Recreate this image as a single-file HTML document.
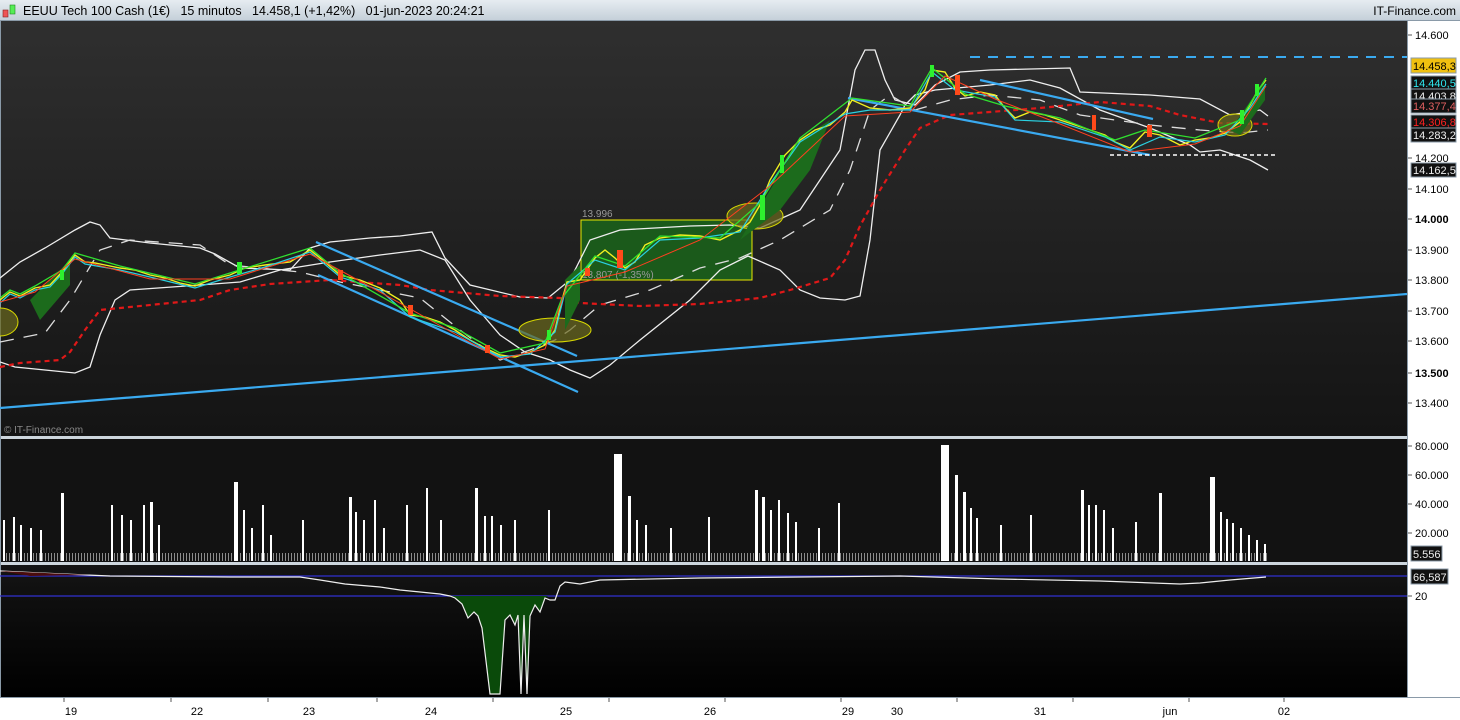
<!DOCTYPE html>
<html><head><meta charset="utf-8"><style>
html,body{margin:0;padding:0;width:1460px;height:720px;overflow:hidden;background:#fff;font-family:"Liberation Sans",Arial,sans-serif}
</style></head><body>
<svg width="1460" height="720" xmlns="http://www.w3.org/2000/svg" font-family="Liberation Sans, Arial, sans-serif">
<defs>
<linearGradient id="hd" x1="0" y1="0" x2="0" y2="1"><stop offset="0" stop-color="#e6ecf1"/><stop offset="1" stop-color="#c5d0d9"/></linearGradient>
<linearGradient id="mg" x1="0" y1="0" x2="0" y2="1"><stop offset="0" stop-color="#2f2f2f"/><stop offset="1" stop-color="#141414"/></linearGradient>
<linearGradient id="rg" x1="0" y1="0" x2="0" y2="1"><stop offset="0" stop-color="#141414"/><stop offset="1" stop-color="#000"/></linearGradient>
<pattern id="st" width="3" height="40" patternUnits="userSpaceOnUse"><rect x="0" y="0" width="1" height="40" fill="#ddd"/></pattern>
</defs>
<rect x="0" y="0" width="1460" height="20" fill="url(#hd)"/>
<rect x="0" y="20" width="1460" height="1" fill="#8a9aa8"/>
<rect x="3" y="10" width="5" height="7" fill="#e55" stroke="#822" stroke-width=".6"/>
<rect x="10" y="5" width="5" height="9" fill="#5e5" stroke="#282" stroke-width=".6"/>
<text x="23" y="15" font-size="12.5" fill="#000" xml:space="preserve">EEUU Tech 100 Cash (1€)   15 minutos   14.458,1 (+1,42%)   01-jun-2023 20:24:21</text>
<text x="1456" y="15" font-size="12" fill="#000" text-anchor="end">IT-Finance.com</text>
<rect x="1" y="21" width="1406" height="415" fill="url(#mg)"/>
<rect x="0" y="21" width="1" height="677" fill="#8a9aa8"/>
<rect x="1" y="436" width="1406" height="3" fill="#cdd6dd"/>
<rect x="1" y="439" width="1406" height="123" fill="#121212"/>
<rect x="1" y="562" width="1406" height="3" fill="#cdd6dd"/>
<rect x="1" y="565" width="1406" height="132" fill="url(#rg)"/>
<rect x="1407" y="21" width="1" height="677" fill="#8a9aa8"/>
<rect x="0" y="697" width="1460" height="1" fill="#8a9aa8"/>
<g fill="none">
<rect x="581" y="220" width="171" height="60" fill="#1b5a1b" stroke="#e8e800" stroke-width="1"/>
<text x="582" y="217" font-size="10" fill="#999">13.996</text>
<text x="582" y="278" font-size="10" fill="#999">13.807 (-1,35%)</text>
<path d="M0,362 L15,367 L75,373 L90,367 L100,335 L115,300 L130,290 L200,285 L240,282 L280,270 L330,262 L380,255 L420,250 L445,260 L470,300 L500,335 L525,352 L550,360 L570,370 L590,378 L610,365 L640,340 L690,300 L720,270 L748,256 L780,270 L800,290 L820,298 L845,300 L860,296 L870,240 L880,150 L900,115 L905,105 L915,95 L935,90 L990,85 L1030,80 L1060,88 L1100,110 L1150,128 L1190,145 L1200,152 L1220,150 L1250,160 L1268,170" stroke="#eee" stroke-width="1.3"/>
<path d="M0,278 L20,262 L45,248 L75,230 L90,222 L100,225 L110,238 L150,243 L200,248 L215,254 L240,268 L290,270 L310,248 L330,242 L370,238 L400,236 L432,232 L445,258 L470,285 L520,297 L548,298 L570,280 L590,240 L620,230 L690,226 L730,225 L760,228 L800,210 L840,150 L855,70 L865,50 L875,50 L885,80 L895,100 L915,105 L935,85 L960,72 L990,70 L1070,68 L1080,92 L1150,95 L1200,99 L1230,115 L1260,110 L1268,116" stroke="#eee" stroke-width="1.3"/>
<path d="M0,342 L45,333 L70,300 L100,250 L130,240 L200,245 L230,265 L300,272 L340,282 L380,290 L420,298 L460,330 L500,360 L530,350 L555,340 L570,330 L600,305 L650,290 L700,268 L740,258 L780,240 L830,210 L850,170 L870,110 L890,95 L915,110 L950,100 L990,95 L1040,100 L1080,115 L1150,125 L1200,130 L1240,133 L1268,130" stroke="#ddd" stroke-width="1.3" stroke-dasharray="14,10"/>
<path d="M0,367 L20,363 L60,360 L70,352 L85,330 L100,310 L130,307 L200,300 L230,290 L270,284 L300,282 L330,280 L400,285 L430,290 L500,296 L560,298 L580,303 L640,306 L700,304 L760,298 L790,290 L830,278 L845,260 L860,226 L880,190 L905,150 L920,128 L950,115 L990,112 L1040,108 L1100,102 L1150,106 L1180,115 L1220,123 L1268,124" stroke="#e01818" stroke-width="2.2" stroke-dasharray="5,4"/>
<path d="M0,408 L1407,294" stroke="#3aaaf0" stroke-width="2.2"/>
<path d="M316,242 L577,356" stroke="#3aaaf0" stroke-width="2.2"/>
<path d="M318,275 L578,392" stroke="#3aaaf0" stroke-width="2.2"/>
<path d="M848,98 L1150,155" stroke="#3aaaf0" stroke-width="2.2"/>
<path d="M980,80 L1153,119" stroke="#3aaaf0" stroke-width="2.2"/>
<path d="M970,57 L1407,57" stroke="#3aaaf0" stroke-width="2" stroke-dasharray="10,8"/>
<path d="M1110,155 L1275,155" stroke="#fff" stroke-width="1.5" stroke-dasharray="4,3"/>
<ellipse cx="0" cy="322" rx="18" ry="14" fill="#6b6a1e" fill-opacity=".7" stroke="#d8d800"/>
<ellipse cx="555" cy="330" rx="36" ry="12" fill="#6b6a1e" fill-opacity=".7" stroke="#d8d800"/>
<ellipse cx="755" cy="216" rx="28" ry="13" fill="#6b6a1e" fill-opacity=".7" stroke="#d8d800"/>
<ellipse cx="1235" cy="125" rx="17" ry="11" fill="#6b6a1e" fill-opacity=".7" stroke="#d8d800"/>
<path d="M565,280 L580,265 L580,300 L565,330 Z M740,240 L770,190 L800,140 L830,120 L810,170 L780,210 Z M1230,130 L1265,80 L1265,100 L1240,135 Z M30,300 L70,260 L70,285 L40,320Z" fill="#1c6b1c"/>
<path d="M0,300 L10,292 L20,296 L35,288 L50,285 L62,272 L75,255 L85,262 L95,263 L105,265 L120,268 L135,270 L150,275 L165,278 L180,283 L195,286 L210,280 L230,275 L245,268 L265,265 L290,262 L310,250 L320,258 L340,275 L360,280 L380,288 L400,300 L410,315 L425,317 L440,322 L455,330 L470,340 L485,348 L500,355 L515,357 L530,352 L545,345 L555,330 L562,300 L567,282 L580,280 L595,258 L605,250 L615,258 L625,268 L635,262 L645,245 L660,238 L680,235 L700,236 L720,240 L740,230 L750,222 L760,205 L770,180 L785,155 L800,140 L815,130 L830,125 L845,112 L852,100 L870,108 L890,110 L910,108 L925,90 L932,70 L945,72 L955,88 L965,96 L980,92 L995,95 L1005,108 L1015,118 L1030,112 L1045,115 L1060,120 L1075,125 L1090,130 L1105,135 L1115,142 L1130,148 L1145,132 L1160,135 L1170,140 L1180,145 L1195,140 L1210,138 L1225,133 L1240,122 L1250,105 L1258,90 L1266,80" stroke="#f0f020" stroke-width="1.4"/>
<path d="M0,303 L10,294 L20,298 L35,290 L50,287 L62,274 L75,257 L85,264 L120,270 L150,277 L195,288 L230,277 L265,267 L310,252 L340,277 L380,290 L410,317 L455,332 L500,357 L530,354 L555,332 L567,284 L595,260 L625,270 L660,240 L700,238 L740,232 L770,184 L800,142 L845,114 L870,110 L910,110 L932,72 L955,90 L995,97 L1015,120 L1060,122 L1105,137 L1130,150 L1160,137 L1195,142 L1225,135 L1250,108 L1266,84" stroke="#2ad0e0" stroke-width="1.2"/>
<path d="M0,298 L10,290 L20,294 L35,286 L62,270 L75,253 L120,266 L195,284 L230,273 L310,248 L340,273 L410,313 L455,328 L500,353 L545,343 L562,298 L595,256 L625,266 L660,236 L720,238 L760,203 L800,138 L852,98 L910,106 L932,68 L965,94 L1005,106 L1060,118 L1115,140 L1145,130 L1195,138 L1240,120 L1266,78" stroke="#30e030" stroke-width="1.3"/>
<path d="M0,302 L35,292 L75,259 L150,279 L230,279 L310,254 L380,292 L455,334 L500,359 L545,349 L567,286 L625,272 L700,240 L770,186 L845,116 L910,112 L945,76 L995,99 L1060,124 L1130,152 L1195,144 L1240,126 L1266,86" stroke="#ff4020" stroke-width="1"/>
</g>
<g fill="#ff4a1a">
<rect x="617" y="250" width="6" height="18"/><rect x="338" y="270" width="5" height="10"/><rect x="955" y="75" width="5" height="20"/><rect x="1092" y="115" width="4" height="15"/><rect x="1147" y="125" width="5" height="12"/><rect x="585" y="268" width="5" height="8"/><rect x="408" y="305" width="5" height="10"/><rect x="485" y="345" width="5" height="8"/>
</g>
<g fill="#2ef02e">
<rect x="760" y="195" width="5" height="25"/><rect x="780" y="155" width="4" height="18"/><rect x="237" y="262" width="5" height="12"/><rect x="930" y="65" width="4" height="12"/><rect x="1240" y="110" width="4" height="14"/><rect x="1255" y="84" width="4" height="12"/><rect x="60" y="270" width="4" height="10"/><rect x="547" y="330" width="4" height="10"/>
</g>
<text x="4" y="433" font-size="10" fill="#888">© IT-Finance.com</text>
<rect x="1" y="553" width="1266" height="8" fill="url(#st)" opacity=".6"/>
<g fill="#fff">
<rect x="3" y="520" width="2" height="41"/><rect x="13" y="517" width="2" height="44"/><rect x="20" y="525" width="2" height="36"/><rect x="30" y="528" width="2" height="33"/><rect x="40" y="530" width="2" height="31"/>
<rect x="61" y="493" width="3" height="68"/><rect x="111" y="505" width="2" height="56"/><rect x="121" y="515" width="2" height="46"/><rect x="130" y="520" width="2" height="41"/><rect x="143" y="505" width="2" height="56"/><rect x="150" y="502" width="3" height="59"/><rect x="158" y="525" width="2" height="36"/>
<rect x="234" y="482" width="4" height="79"/><rect x="243" y="510" width="2" height="51"/><rect x="251" y="528" width="2" height="33"/><rect x="262" y="505" width="2" height="56"/><rect x="270" y="535" width="2" height="26"/><rect x="302" y="520" width="2" height="41"/>
<rect x="349" y="497" width="3" height="64"/><rect x="355" y="512" width="2" height="49"/><rect x="363" y="520" width="2" height="41"/><rect x="374" y="500" width="2" height="61"/><rect x="383" y="528" width="2" height="33"/><rect x="406" y="505" width="2" height="56"/><rect x="426" y="488" width="2" height="73"/><rect x="440" y="520" width="2" height="41"/>
<rect x="475" y="488" width="3" height="73"/><rect x="484" y="516" width="2" height="45"/><rect x="491" y="516" width="2" height="45"/><rect x="500" y="525" width="2" height="36"/><rect x="514" y="520" width="2" height="41"/><rect x="548" y="510" width="2" height="51"/>
<rect x="614" y="454" width="8" height="107"/><rect x="628" y="496" width="3" height="65"/><rect x="636" y="520" width="2" height="41"/><rect x="645" y="525" width="2" height="36"/><rect x="670" y="528" width="2" height="33"/><rect x="708" y="517" width="2" height="44"/>
<rect x="755" y="490" width="3" height="71"/><rect x="762" y="497" width="3" height="64"/><rect x="770" y="510" width="2" height="51"/><rect x="778" y="500" width="2" height="61"/><rect x="787" y="513" width="2" height="48"/><rect x="795" y="522" width="2" height="39"/><rect x="838" y="503" width="2" height="58"/><rect x="818" y="528" width="2" height="33"/>
<rect x="941" y="445" width="8" height="116"/><rect x="955" y="475" width="3" height="86"/><rect x="963" y="492" width="3" height="69"/><rect x="970" y="508" width="2" height="53"/><rect x="976" y="518" width="2" height="43"/><rect x="1000" y="525" width="2" height="36"/><rect x="1030" y="515" width="2" height="46"/>
<rect x="1081" y="490" width="3" height="71"/><rect x="1088" y="505" width="2" height="56"/><rect x="1095" y="505" width="2" height="56"/><rect x="1103" y="510" width="2" height="51"/><rect x="1112" y="528" width="2" height="33"/><rect x="1135" y="522" width="2" height="39"/><rect x="1159" y="493" width="3" height="68"/>
<rect x="1210" y="477" width="5" height="84"/><rect x="1220" y="512" width="2" height="49"/><rect x="1226" y="519" width="2" height="42"/><rect x="1232" y="523" width="2" height="38"/><rect x="1240" y="528" width="2" height="33"/><rect x="1248" y="535" width="2" height="26"/><rect x="1256" y="540" width="2" height="21"/><rect x="1264" y="544" width="2" height="17"/>
</g>
<path d="M0,576 L1407,576" stroke="#3030d0" stroke-width="1.2"/>
<path d="M0,596 L1407,596" stroke="#3030d0" stroke-width="1.2"/>
<path d="M450,596 L455,598 L462,604 L468,618 L474,612 L478,616 L482,628 L490,694 L500,694 L505,620 L510,615 L515,625 L518,615 L521,694 L524,615 L527,694 L530,616 L535,605 L540,612 L545,598 L548,596 Z" fill="#0a4a0a"/>
<path d="M0,571 L40,573 L110,576 L230,577 L300,577 L320,580 L345,584 L380,587 L400,590 L420,592 L440,594 L450,596 L455,598 L462,604 L468,618 L474,612 L478,616 L482,628 L490,694 L500,694 L505,620 L510,615 L515,625 L518,615 L521,694 L524,615 L527,694 L530,616 L535,605 L540,612 L545,598 L550,600 L555,600 L560,586 L565,582 L580,584 L600,580 L700,578 L800,577 L900,576 L1000,579 L1100,581 L1180,584 L1200,583 L1230,580 L1266,577" stroke="#eee" stroke-width="1.2" fill="none"/>
<path d="M0,571 L90,575 L30,576Z" fill="#4a0c0c"/>
<g font-size="11" fill="#000">
<text x="1415" y="39">14.600</text>
<text x="1415" y="162">14.200</text>
<text x="1415" y="193">14.100</text>
<text x="1415" y="223" font-weight="bold">14.000</text>
<text x="1415" y="254">13.900</text>
<text x="1415" y="284">13.800</text>
<text x="1415" y="315">13.700</text>
<text x="1415" y="345">13.600</text>
<text x="1415" y="377" font-weight="bold">13.500</text>
<text x="1415" y="407">13.400</text>
<text x="1415" y="450">80.000</text>
<text x="1415" y="479">60.000</text>
<text x="1415" y="508">40.000</text>
<text x="1415" y="537">20.000</text>
<text x="1415" y="600">20</text>
</g>
<g stroke="#555"><path d="M1408,35h4M1408,158h4M1408,189h4M1408,219h4M1408,250h4M1408,280h4M1408,311h4M1408,341h4M1408,373h4M1408,403h4M1408,446h4M1408,475h4M1408,504h4M1408,533h4M1408,596h4"/></g>
<rect x="1411" y="58" width="45" height="15" fill="#f0c010" stroke="#8a9aa8"/>
<text x="1413" y="70" font-size="11" fill="#000">14.458,3</text>
<g font-size="11">
<rect x="1411" y="76" width="45" height="14" fill="#111" stroke="#8a9aa8"/><text x="1413" y="87" fill="#2ee8f0">14.440,5</text>
<rect x="1411" y="89" width="45" height="14" fill="#111" stroke="#8a9aa8"/><text x="1413" y="100" fill="#eee">14.403,8</text>
<rect x="1411" y="99" width="45" height="14" fill="#111" stroke="#8a9aa8"/><text x="1413" y="110" fill="#e06060">14.377,4</text>
<rect x="1411" y="115" width="45" height="14" fill="#111" stroke="#8a9aa8"/><text x="1413" y="126" fill="#ff2020">14.306,8</text>
<rect x="1411" y="128" width="45" height="14" fill="#111" stroke="#8a9aa8"/><text x="1413" y="139" fill="#eee">14.283,2</text>
<rect x="1411" y="163" width="45" height="14" fill="#111" stroke="#8a9aa8"/><text x="1413" y="174" fill="#eee">14.162,5</text>
<rect x="1411" y="546" width="31" height="15" fill="#111" stroke="#8a9aa8"/><text x="1413" y="558" fill="#eee">5.556</text>
<rect x="1411" y="569" width="37" height="15" fill="#111" stroke="#8a9aa8"/><text x="1413" y="581" fill="#eee">66,587</text>
</g>
<g font-size="11" fill="#000" text-anchor="middle">
<text x="71" y="715">19</text><text x="197" y="715">22</text><text x="309" y="715">23</text><text x="431" y="715">24</text><text x="566" y="715">25</text><text x="710" y="715">26</text><text x="848" y="715">29</text><text x="897" y="715">30</text><text x="1040" y="715">31</text><text x="1170" y="715">jun</text><text x="1284" y="715">02</text>
</g>
<g stroke="#555"><path d="M64,698v4M171,698v4M268,698v4M377,698v4M493,698v4M609,698v4M725,698v4M841,698v4M957,698v4M1073,698v4M1189,698v4M1284,698v4"/></g>
</svg>
</body></html>
